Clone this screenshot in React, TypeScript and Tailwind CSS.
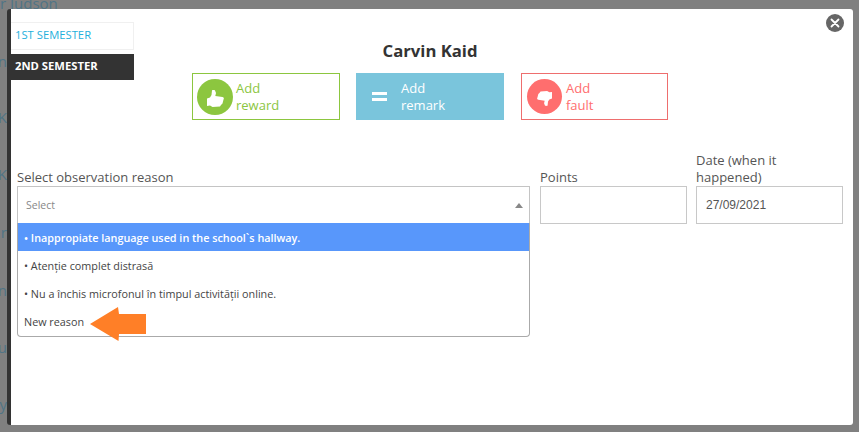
const font = { fontFamily: '"Open Sans", sans-serif' };

function Thumb({ className }: { className: string }) {
  return (
    <svg viewBox="0 0 17 17" className={className} fill="#fff">
      <path d="M0 8.500L3 7.500 4.500 5 5 .5C5.200 0 7.500-.2 8 .5L9 3 8.300 6 15.500 7C16.800 7.300 17.200 8.500 16.500 9.500L16 11.500 15.500 13.500 14 15 13 16.500 5.500 17 3 15.500 0 16z" />
    </svg>
  );
}

const options = [
  '• Atenție complet distrasă',
  '• Nu a închis microfonul în timpul activității online.',
];

// rows of the list behind the overlay, only their clipped edge shows
const behind = [
  { letter: 'n', top: 'top-[50px]' },
  { letter: 'K', top: 'top-[106px]' },
  { letter: 'K', top: 'top-[163px]' },
  { letter: 'r', top: 'top-[221px]' },
  { letter: 'n', top: 'top-[279px]' },
  { letter: 'u', top: 'top-[336px]' },
  { letter: 'y', top: 'top-[393px]' },
];

export default function App() {
  return (
    <div className="relative w-[859px] h-[432px] overflow-hidden bg-[#808080] pt-[9px] pl-[7px] pr-[6px] pb-[7px]" style={font}>
      <span className="absolute left-0 top-[-8px] text-[15px] text-[#4f7486]">r Judson</span>
      {behind.map((b) => (
        <span key={b.top} className={`absolute right-[852px] ${b.top} text-[15px] text-[#4f7486]`}>{b.letter}</span>
      ))}

      <div className="relative h-full bg-white border-l-4 border-[#333333] rounded-[3px]">
        <div className="absolute right-[9px] top-[5px] w-[18px] h-[18px] rounded-full bg-[#666666] flex items-center justify-center">
          <svg viewBox="0 0 12 12" className="w-[12px] h-[12px]" stroke="#fff" strokeWidth="1.800" strokeLinecap="round">
            <path d="M2.500 2.500l7 7M9.500 2.500l-7 7" />
          </svg>
        </div>

        <div className="flex">
          <div className="w-[123px] pt-[13px] text-[11.25px]">
            <div className="h-[28px] pl-[4px] flex items-center bg-white border-y border-r border-[#f0f0f0] text-[#1fb0dc] pb-[2px]">1ST SEMESTER</div>
            <div className="mt-[4px] h-[26px] pl-[4px] pb-[1px] flex items-center bg-[#333333] text-white font-bold">2ND SEMESTER</div>
          </div>

          <div className="ml-[58px] w-[476px]">
            <h1 className="mt-[30px] h-[24px] text-center text-[16.7px] leading-[24px] font-bold text-[#333333]">Carvin Kaid</h1>
            <div className="mt-[10px] flex gap-[16px]">
              <div className="w-[148px] h-[47px] border border-[#8cc63f] flex items-center pl-[4px] text-[13px] leading-[17px] text-[#8cc63f]">
                <div className="w-[36px] h-[36px] rounded-full bg-[#8cc63f] flex items-center justify-center shrink-0"><Thumb className="w-[17px] h-[17px] mt-[3px] ml-[1px]" /></div>
                <span className="ml-[3px]">Add<br />reward</span>
              </div>
              <div className="w-[148px] h-[47px] bg-[#7ac5dc] flex items-center text-[13px] leading-[17px] text-white">
                <div className="ml-[16px] w-[15px] flex flex-col gap-[3px] shrink-0">
                  <div className="h-[3px] bg-white" />
                  <div className="h-[3px] bg-white" />
                </div>
                <span className="ml-[14px]">Add<br />remark</span>
              </div>
              <div className="ml-[1px] w-[147px] h-[47px] border border-[#ee6e6e] flex items-center pl-[5px] text-[13px] leading-[17px] text-[#ff6e6e]">
                <div className="w-[35px] h-[35px] rounded-full bg-[#ff6e6e] flex items-center justify-center shrink-0"><Thumb className="w-[15px] h-[15px] mt-[3px] rotate-180" /></div>
                <span className="ml-[4px]">Add<br />fault</span>
              </div>
            </div>
          </div>
        </div>

        <div className="mt-[32px] ml-[6px] flex items-end text-[13px] leading-[17px] text-[#555555]">
          <div className="relative w-[513px]">
            <div>Select observation reason</div>
            <div className="h-[38px] border border-[#c4c4c4] flex items-center justify-between pl-[8px] pr-[5px] text-[10.5px] text-[#888888]">
              <span>Select</span>
              <div className="w-0 h-0 border-x-[4px] border-x-transparent border-b-[5px] border-b-[#888888] mr-[1px]" />
            </div>
            <div className="absolute left-0 top-[calc(100%-1px)] w-[513px] h-[114px] bg-white border-x border-b border-[#aaaaaa] rounded-b-[4px] text-[10.8px] text-[#444444]">
              <div className="h-[28px] flex items-center pl-[6px] bg-[#5897fb] text-white font-semibold">• Inappropiate language used in the school`s hallway.</div>
              {options.map((o) => (
                <div key={o} className="h-[28px] flex items-center pl-[6px]">{o}</div>
              ))}
              <div className="h-[28px] flex items-center pl-[6px]">New reason</div>
              {/* callout arrow */}
              <svg viewBox="0 0 58 34" className="absolute left-[71px] top-[84px] w-[58px] h-[34px]" fill="#ff7f27">
                <path d="M1 17L29 0l1 7h27v20H30l-.5 7z" />
              </svg>
            </div>
          </div>

          <div className="ml-[10px] w-[147px]">
            <div>Points</div>
            <div className="h-[38px] border border-[#c8c8c8]" />
          </div>

          <div className="ml-[9px] w-[147px]">
            <div>Date (when it<br />happened)</div>
            <div className="h-[38px] border border-[#c8c8c8] flex items-center pl-[9px] text-[12px] text-[#555555]" style={{ fontFamily: '"Liberation Sans", sans-serif' }}>27/09/2021</div>
          </div>
        </div>
      </div>
    </div>
  );
}
